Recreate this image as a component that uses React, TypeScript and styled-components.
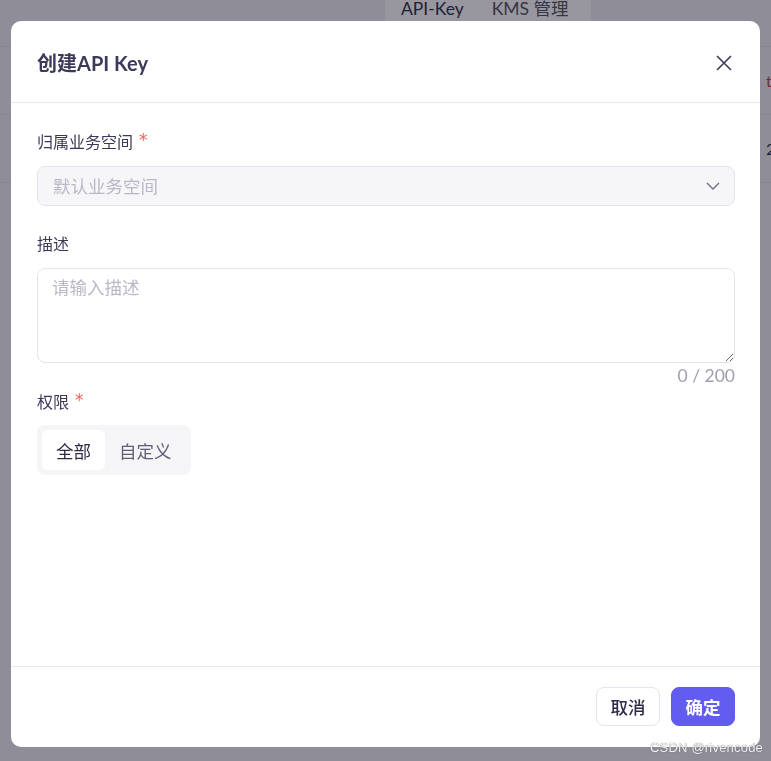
import React from "react";
import styled, { createGlobalStyle } from "styled-components";

const GlobalStyle = createGlobalStyle`
  html, body {
    margin: 0;
    padding: 0;
    height: 100%;
    overflow: hidden;
  }
  body {
    font-family: "Lato", "Noto Sans CJK SC", sans-serif;
    background: #ececf0;
  }
  * { box-sizing: border-box; }
`;

const colors = {
  title: "#3b3a59",
  label: "#393856",
  placeholder: "#b9b8c6",
  muted: "#a09fae",
  border: "#e4e4ec",
  fill: "#f6f6f9",
  primary: "#625df0",
  danger: "#f6615a",
};

/* ---------- page behind the dialog ---------- */

const Page = styled.div`
  width: 100%;
  height: 100vh;
  background: #ececf0;
`;

const TopBar = styled.div`
  height: 47px;
  border-bottom: 1px solid #dcdce4;
  display: flex;
  align-items: flex-start;
`;

const Tabs = styled.div`
  margin-left: 385px;
  display: flex;
  padding: 0 22px 0 16px;
  height: 30px;
  background: #fbfbfd;
  border-radius: 0 0 8px 8px;
`;

const Tab = styled.div<{ $active?: boolean }>`
  font-size: 17.5px;
  line-height: 18px;
  color: ${(p) => (p.$active ? "#25243f" : "#4a4960")};
  margin-right: 28px;
  &:last-child { margin-right: 0; }
`;

const TableRow = styled.div`
  height: 68px;
  border-bottom: 1px solid #dcdce4;
  display: flex;
  align-items: center;
  overflow: hidden;
`;

const Cell = styled.div<{ $tone?: string }>`
  margin-left: 766px;
  font-size: 16px;
  white-space: nowrap;
  color: ${(p) => p.$tone || "#25243f"};
`;

/* ---------- dialog ---------- */

const Overlay = styled.div`
  position: fixed;
  inset: 0;
  background: rgba(30, 29, 44, 0.45);
  display: flex;
  justify-content: center;
  align-items: flex-start;
`;

const Dialog = styled.div`
  margin-top: 21px;
  width: 749px;
  height: 726px;
  background: #fff;
  border-radius: 10px;
  display: flex;
  flex-direction: column;
  overflow: hidden;
`;

const Header = styled.div`
  height: 82px;
  flex-shrink: 0;
  border-bottom: 1px solid #e6e6ee;
  display: flex;
  align-items: center;
  justify-content: space-between;
  padding: 2px 24px 0 26px;
`;

const Title = styled.h2`
  margin: 0;
  font-size: 20px;
  font-weight: 700;
  color: ${colors.title};
`;

const CloseButton = styled.button`
  width: 24px;
  height: 24px;
  padding: 0;
  border: 0;
  background: none;
  display: flex;
  align-items: center;
  justify-content: center;
  color: ${colors.title};
  cursor: pointer;
`;

const Body = styled.div`
  flex: 1;
  padding: 28px 25px 0 26px;
  display: flex;
  flex-direction: column;
`;

const Label = styled.div<{ $gap?: number }>`
  font-size: 16px;
  line-height: 22px;
  color: ${colors.label};
  margin-top: ${(p) => p.$gap ?? 0}px;
  margin-bottom: 13px;
  display: flex;
  align-items: flex-start;
`;

const Required = styled.span`
  color: ${colors.danger};
  margin-left: 6px;
  font-family: "DejaVu Sans", sans-serif;
  font-size: 17px;
  line-height: 17px;
  margin-top: 1px;
`;

const Select = styled.div`
  height: 40px;
  border: 1px solid ${colors.border};
  background: ${colors.fill};
  border-radius: 8px;
  display: flex;
  align-items: center;
  justify-content: space-between;
  padding: 0 14px 1px 15px;
  font-size: 17.5px;
  color: ${colors.placeholder};
`;

const TextArea = styled.textarea`
  display: block;
  width: 100%;
  height: 95px;
  border: 1px solid ${colors.border};
  border-radius: 8px;
  padding: 7px 14px;
  font-family: inherit;
  font-size: 17.5px;
  line-height: 24px;
  color: ${colors.label};
  resize: vertical;
  outline: none;
  &::placeholder {
    color: ${colors.placeholder};
  }
`;

const Counter = styled.div`
  text-align: right;
  font-size: 17.5px;
  line-height: 22px;
  margin-top: 2px;
  color: ${colors.muted};
`;

const Segmented = styled.div`
  align-self: flex-start;
  display: flex;
  padding: 5px;
  height: 50px;
  background: #f5f5f8;
  border-radius: 8px;
  margin-top: -1px;
`;

const Segment = styled.div<{ $active?: boolean }>`
  padding: 0 14px;
  height: 40px;
  display: flex;
  align-items: center;
  font-size: 17.5px;
  border-radius: 6px;
  background: ${(p) => (p.$active ? "#fff" : "transparent")};
  color: ${(p) => (p.$active ? "#2c2b47" : "#5f5e76")};
`;

const Footer = styled.div`
  flex-shrink: 0;
  border-top: 1px solid #e6e6ee;
  padding: 20px 25px 21px;
  display: flex;
  justify-content: flex-end;
  gap: 11px;
`;

const Button = styled.button<{ $primary?: boolean }>`
  width: 64px;
  height: 39px;
  border-radius: 8px;
  font-family: inherit;
  font-size: 17.5px;
  font-weight: ${(p) => (p.$primary ? 700 : 500)};
  border: 1px solid ${(p) => (p.$primary ? colors.primary : colors.border)};
  background: ${(p) => (p.$primary ? colors.primary : "#fff")};
  color: ${(p) => (p.$primary ? "#fff" : "#2c2b47")};
  cursor: pointer;
  padding: 0;
`;

const Watermark = styled.div`
  position: fixed;
  right: 8px;
  bottom: 6px;
  font-family: "Liberation Sans", sans-serif;
  font-size: 13px;
  color: #f2f2f4;
  text-shadow: 0 0 1px #55545e;
  letter-spacing: 0.2px;
`;

const ChevronDown = () => (
  <svg width="14" height="8" viewBox="0 0 14 8" fill="none">
    <path d="M1 1l6 6 6-6" stroke="#6e6d85" strokeWidth="1.3" />
  </svg>
);

const CloseIcon = () => (
  <svg width="16" height="16" viewBox="0 0 16 16" fill="none">
    <path d="M1 1l14 14M15 1L1 15" stroke="currentColor" strokeWidth="1.6" />
  </svg>
);

export default function App() {
  return (
    <>
      <GlobalStyle />
      <Page>
        <TopBar>
          <Tabs>
            <Tab $active>API-Key</Tab>
            <Tab>KMS 管理</Tab>
          </Tabs>
        </TopBar>
        <TableRow>
          <Cell $tone="#b33a2a">t</Cell>
        </TableRow>
        <TableRow>
          <Cell>2</Cell>
        </TableRow>
      </Page>
      <Overlay>
        <Dialog>
          <Header>
            <Title>创建API Key</Title>
            <CloseButton aria-label="close">
              <CloseIcon />
            </CloseButton>
          </Header>
          <Body>
            <Label>
              归属业务空间<Required>*</Required>
            </Label>
            <Select>
              <span>默认业务空间</span>
              <ChevronDown />
            </Select>
            <Label $gap={27}>描述</Label>
            <TextArea placeholder="请输入描述" />
            <Counter>0 / 200</Counter>
            <Label $gap={4}>
              权限<Required>*</Required>
            </Label>
            <Segmented>
              <Segment $active>全部</Segment>
              <Segment>自定义</Segment>
            </Segmented>
          </Body>
          <Footer>
            <Button>取消</Button>
            <Button $primary>确定</Button>
          </Footer>
        </Dialog>
      </Overlay>
      <Watermark>CSDN @rivencode</Watermark>
    </>
  );
}
